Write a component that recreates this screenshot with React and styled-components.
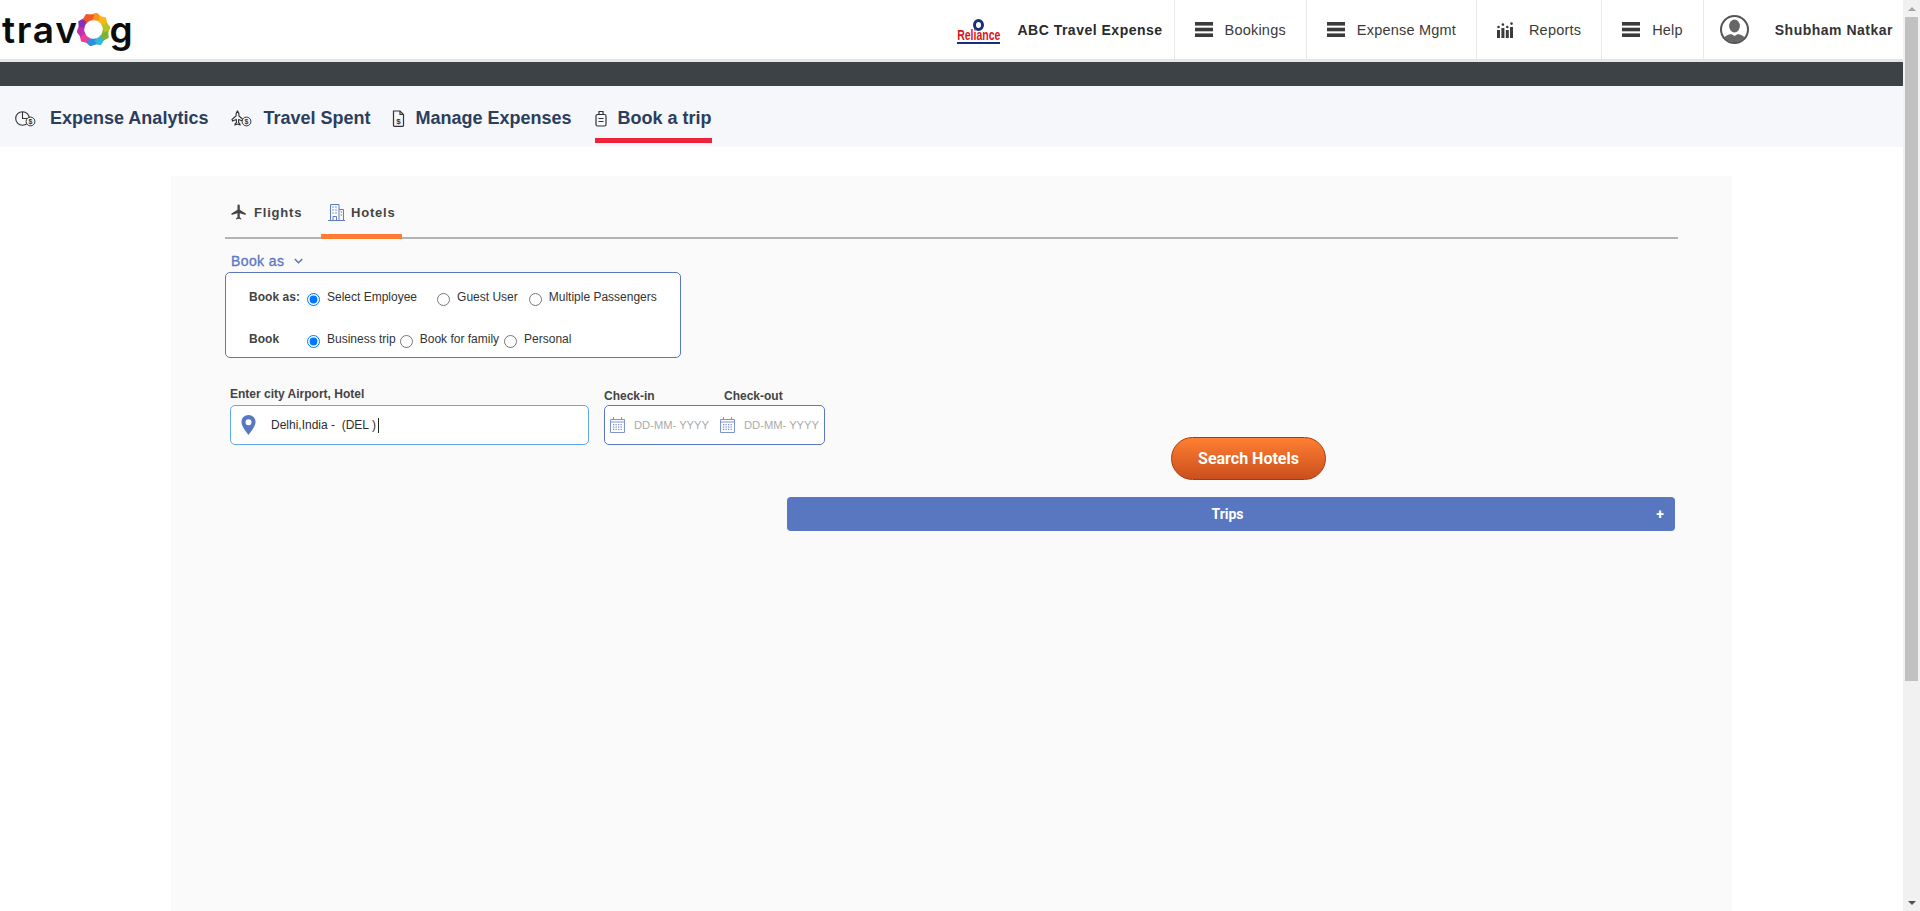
import React from "react";
import styled, { createGlobalStyle } from "styled-components";
import { MdFlight } from "react-icons/md";

const Global = createGlobalStyle`
  html, body {
    margin: 0;
    padding: 0;
    height: 100%;
    overflow: hidden;
    background: #fff;
    font-family: "Liberation Sans", Arial, sans-serif;
  }
`;

const Shell = styled.div`
  display: flex;
  height: 100vh;
  overflow: hidden;
`;

const Main = styled.div`
  flex: 1;
  min-width: 0;
  display: flex;
  flex-direction: column;
`;

const ScrollTrack = styled.aside`
  width: 17px;
  flex: none;
  background: #f1f1f1;
  display: flex;
  flex-direction: column;
  align-items: center;
`;

const ScrollArrow = styled.div`
  flex: none;
  height: 17px;
  display: flex;
  align-items: center;
  justify-content: center;
  &::before {
    content: "";
    width: 0;
    height: 0;
    border-left: 4px solid transparent;
    border-right: 4px solid transparent;
    ${(p) => (p.$down ? "border-top: 4px solid #505050;" : "border-bottom: 4px solid #a3a3a3;")}
  }
`;

const ScrollThumb = styled.div`
  width: 13px;
  height: 664px;
  background: #c1c1c1;
`;

const ScrollGap = styled.div`
  flex: 1;
`;

const Header = styled.header`
  flex: none;
  height: 59px;
  display: flex;
  justify-content: space-between;
  background: #fff;
  border-bottom: 3px solid #e6e6e6;
`;

const Logo = styled.div`
  display: flex;
  align-items: baseline;
  padding: 0 0 0 2px;
  font-family: Inter, sans-serif;
  font-size: 37px;
  font-weight: 600;
  line-height: 59px;
  letter-spacing: 1.7px;
  color: #0c0c0c;
  height: 59px;
  overflow: hidden;
`;

const LogoRing = styled.svg`
  width: 33px;
  height: 33px;
  margin: 0 0 0 -2px;
  transform: translateY(3px);
`;

const HeaderRight = styled.div`
  display: flex;
  align-items: stretch;
`;

const Brand = styled.div`
  display: flex;
  align-items: center;
  padding-right: 11px;
`;

const RelianceMark = styled.div`
  width: 43px;
  margin-right: 17px;
  display: flex;
  flex-direction: column;
  align-items: center;
  margin-top: 3px;
`;

const RelianceDot = styled.div`
  width: 11px;
  height: 12px;
  border: 3px solid #16307c;
  border-radius: 50%;
  margin-bottom: -2px;
  box-sizing: border-box;
`;

const RelianceWord = styled.div`
  font-size: 14px;
  font-weight: 700;
  color: #d8141c;
  line-height: 12px;
  transform: scaleX(0.75);
`;

const RelianceLine = styled.div`
  width: 43px;
  height: 2px;
  background: #16307c;
  margin-top: 1px;
`;

const BrandName = styled.span`
  font-size: 14px;
  font-weight: 700;
  letter-spacing: 0.5px;
  color: #2a2a2a;
`;

const NavItem = styled.a`
  display: flex;
  align-items: center;
  gap: ${(p) => p.$gap || 12}px;
  padding: 0 ${(p) => p.$pad || 20}px;
  border-left: 1px solid #e8e8e8;
  font-size: 14.5px;
  letter-spacing: 0.2px;
  color: #3a3a3a;
`;

const UserBox = styled.div`
  display: flex;
  align-items: center;
  gap: 26px;
  padding: 0 10px 0 16px;
  border-left: 1px solid #e8e8e8;
`;

const UserName = styled.span`
  font-size: 14px;
  font-weight: 700;
  letter-spacing: 0.5px;
  color: #333;
`;

const DarkBar = styled.div`
  flex: none;
  height: 24px;
  background: #3c4245;
`;

const SubNav = styled.nav`
  flex: none;
  height: 61px;
  box-sizing: border-box;
  display: flex;
  padding: 0 0 4px 15px;
  background: #f5f7fb;
`;

const SubLink = styled.a`
  display: flex;
  align-items: center;
  gap: ${(p) => p.$gap}px;
  margin-right: ${(p) => p.$right}px;
  box-sizing: border-box;
  padding-top: 13px;
  border-bottom: 5px solid ${(p) => (p.$active ? "#ee2238" : "transparent")};
  font-size: 18px;
  font-weight: 700;
  color: #2c3e5c;
`;

const Panel = styled.section`
  flex: 1;
  width: 1561px;
  box-sizing: border-box;
  margin: 29px 0 0 171px;
  padding: 17px 54px 0 54px;
  background: #fafafa;
`;

const Tabs = styled.div`
  display: flex;
  height: 46px;
  box-sizing: border-box;
  border-bottom: 2px solid #b3b3b3;
`;

const Tab = styled.a`
  display: flex;
  align-items: center;
  gap: ${(p) => p.$gap}px;
  height: 46px;
  box-sizing: border-box;
  padding: 0 6px 0 ${(p) => p.$left}px;
  width: ${(p) => p.$width}px;
  margin-right: ${(p) => p.$right || 0}px;
  border-bottom: ${(p) => (p.$active ? "5px solid #ff7b32" : "none")};
  padding-bottom: ${(p) => (p.$active ? 3 : 8)}px;
  font-size: 13px;
  font-weight: 700;
  letter-spacing: 0.8px;
  color: #444;
`;

const BookToggle = styled.div`
  display: flex;
  align-items: center;
  gap: 10px;
  height: 33px;
  padding: 11px 0 0 6px;
  box-sizing: border-box;
  font-size: 14px;
  letter-spacing: 0.4px;
  color: #5a77bf;
  -webkit-text-stroke: 0.3px #5a77bf;
`;

const BookBox = styled.div`
  width: 456px;
  height: 86px;
  box-sizing: border-box;
  display: flex;
  flex-direction: column;
  gap: 16px;
  padding: 11px 0 0 23px;
  border: 1px solid #5a77c1;
  border-radius: 5px;
  background: #fff;
`;

const RadioRow = styled.div`
  display: flex;
  align-items: center;
  height: 26px;
  font-size: 12px;
  color: #333;
`;

const RadioLabel = styled.span`
  width: 58px;
  flex: none;
  font-weight: 700;
  color: #444;
  letter-spacing: 0.05px;
`;

const RadioOption = styled.label`
  display: flex;
  align-items: center;
  gap: 7px;
  margin-right: ${(p) => p.$right}px;
`;

const Radio = styled.input.attrs({ type: "radio" })`
  width: 13px;
  height: 13px;
  margin: 4px 0 0;
`;

const FieldRow = styled.div`
  display: flex;
  align-items: flex-end;
  gap: 15px;
  margin: 29px 0 -8px 5px;
`;

const Field = styled.div`
  display: flex;
  flex-direction: column;
  gap: ${(p) => p.$gap}px;
`;

const FieldLabel = styled.label`
  font-size: 12px;
  font-weight: 700;
  color: #444;
  line-height: 14px;
`;

const DateLabels = styled.div`
  display: flex;
`;

const DateLabel = styled(FieldLabel)`
  width: 120px;
`;

const CityBox = styled.div`
  width: 359px;
  height: 40px;
  box-sizing: border-box;
  display: flex;
  align-items: center;
  gap: 15px;
  padding-left: 10px;
  border: 1px solid #62a8ea;
  border-radius: 5px;
  background: #fff;
  font-size: 12px;
  color: #2d2d2d;
`;

const Caret = styled.span`
  width: 1px;
  height: 15px;
  background: #222;
  margin-left: 2px;
`;

const CityText = styled.span`
  display: flex;
  align-items: center;
`;

const DateBox = styled.div`
  width: 221px;
  height: 40px;
  box-sizing: border-box;
  display: flex;
  align-items: center;
  padding-left: 5px;
  border: 1px solid #5a77c1;
  border-radius: 5px;
  background: #fff;
`;

const DateSlot = styled.div`
  width: 110px;
  flex: none;
  display: flex;
  align-items: center;
  gap: 9px;
  font-size: 11.2px;
  color: #aaa;
`;

const Lower = styled.div`
  margin-left: 562px;
  display: flex;
  flex-direction: column;
`;

const SearchButton = styled.button`
  width: 155px;
  height: 43px;
  margin-left: 384px;
  padding: 0;
  border: 1px solid #a93a10;
  border-radius: 22px;
  background: linear-gradient(#ff7f32, #cb4f1d);
  color: #fff;
  font-family: Roboto, sans-serif;
  font-size: 16px;
  font-weight: 700;
`;

const TripsBar = styled.div`
  position: relative;
  width: 888px;
  height: 34px;
  box-sizing: border-box;
  padding-right: 7px;
  margin-top: 17px;
  display: flex;
  align-items: center;
  justify-content: center;
  border-radius: 4px;
  background: #5877c0;
  color: #fff;
  font-family: Roboto, sans-serif;
  font-size: 14px;
  font-weight: 700;
`;

const TripsPlus = styled.span`
  position: absolute;
  right: 11px;
  top: 9px;
  line-height: 16px;
  font-size: 14px;
`;

function Bars() {
  return (
    <svg width="18" height="15" viewBox="0 0 18 15" fill="#3b3b3b">
      <rect width="18" height="3.6" />
      <rect y="5.7" width="18" height="3.6" />
      <rect y="11.4" width="18" height="3.6" />
    </svg>
  );
}

function ReportsIcon() {
  return (
    <svg width="16" height="16" viewBox="0 0 16 16" fill="#3b3b3b">
      <rect x="0" y="8" width="3" height="8" />
      <rect x="4.4" y="6" width="3" height="10" />
      <rect x="8.8" y="8" width="3" height="8" />
      <rect x="13" y="5" width="3" height="11" />
      <circle cx="1.5" cy="5" r="1.3" />
      <circle cx="5.9" cy="2.6" r="1.3" />
      <circle cx="10.3" cy="5" r="1.3" />
      <circle cx="14.5" cy="1.6" r="1.3" />
    </svg>
  );
}

function Avatar() {
  return (
    <svg width="29" height="29" viewBox="0 0 29 29">
      <defs>
        <clipPath id="avatar-clip">
          <circle cx="14.5" cy="14.5" r="12.6" />
        </clipPath>
      </defs>
      <circle cx="14.5" cy="14.5" r="13.5" fill="#fff" stroke="#555" strokeWidth="2" />
      <g clipPath="url(#avatar-clip)" fill="#666">
        <ellipse cx="14.5" cy="11" rx="5.4" ry="6.5" />
        <path d="M2 29c0-7 5-9 9-10l3.500 2 3.500-2c4 1 9 3 9 10z" />
      </g>
    </svg>
  );
}

const ringColors = ["#f7941e", "#fbb517", "#b7c322", "#7fb32d", "#35b6d8", "#2e8fe0", "#ec3f95", "#c22fb0", "#8a30b8", "#f1572a"];

function Ring() {
  return (
    <LogoRing viewBox="0 0 32 32">
      {ringColors.map((c, i) => (
        <polygon
          key={c}
          fill={c}
          points="13,2 19,-0.500 25,5 21,7.500 16,7 13,7.500 15,5"
          transform={`rotate(${i * 36} 16 16)`}
        />
      ))}
    </LogoRing>
  );
}

function SmallDollar({ cx, cy }) {
  return (
    <g>
      <circle cx={cx} cy={cy} r="4.4" fill="#f5f7fb" stroke="#333" strokeWidth="1" />
      <text x={cx} y={cy + 2.5} fontSize="7" fontFamily="Liberation Sans" textAnchor="middle" fill="#333" stroke="none">$</text>
    </g>
  );
}

function AnalyticsIcon() {
  return (
    <svg width="21" height="16" viewBox="0 0 21 16" fill="none" stroke="#333" strokeWidth="1.1">
      <circle cx="7.500" cy="7.500" r="6.800" />
      <path d="M7.500 1v6.500H13" />
      <SmallDollar cx={15.5} cy={10.5} />
    </svg>
  );
}

function PlaneDollarIcon() {
  return (
    <svg width="21" height="17" viewBox="0 0 21 17" fill="none" stroke="#333" strokeWidth="1.1">
      <path d="M8.500 1c1.300 1.200 1.500 3 1.500 5l4 3.500-.5 1.500-3.800-1.500-.2 3 1.500 1.500v1L8.500 14 6 15v-1l1.500-1.500-.2-3-3.800 1.500L3 9.500 7 6c0-2 .3-3.800 1.500-5z" transform="translate(-2 0)" />
      <SmallDollar cx={15.5} cy={11.5} />
    </svg>
  );
}

function DocIcon() {
  return (
    <svg width="13" height="17" viewBox="0 0 13 17" fill="none" stroke="#333" strokeWidth="1.2">
      <path d="M1.500 1h6.500l3.500 3.500v11a.8.8 0 0 1-.8.8H2.300a.8.8 0 0 1-.8-.8z" />
      <path d="M8 1v3.500h3.500" />
      <text x="6.500" y="13.500" fontSize="8" fontFamily="Liberation Sans" fontWeight="700" textAnchor="middle" fill="#333" stroke="none">$</text>
    </svg>
  );
}

function BagIcon() {
  return (
    <svg width="12" height="17" viewBox="0 0 12 17" fill="none" stroke="#333" strokeWidth="1.200">
      <rect x="1" y="4.500" width="10" height="11.500" rx="1.500" />
      <path d="M4 4.500V1.500h4v3M3.500 8.500h5M3.500 11.500h5" />
    </svg>
  );
}

function HotelIcon() {
  return (
    <svg width="17" height="17" viewBox="0 0 17 17" fill="none" stroke="#5f7cc2" strokeWidth="1">
      <path d="M0 16.500h17M2.500 16.500V.5h8.500v16M11 5.500h4.500v11" />
      <path d="M4.500 3h1M7.500 3h1M4.500 6h1M7.500 6h1M4.500 9h1M7.500 9h1M12.800 8h1M12.800 11h1" strokeWidth="1.500" />
      <path d="M5 16.500v-4h3.500v4" />
    </svg>
  );
}

function Chevron() {
  return (
    <svg width="9" height="6" viewBox="0 0 9 6" fill="none" stroke="#5a77bf" strokeWidth="1.600">
      <path d="M.8 1l3.700 3.700L8.200 1" />
    </svg>
  );
}

function Pin() {
  return (
    <svg width="15" height="20" viewBox="0 0 15 20">
      <path fill="#5a77c1" fillRule="evenodd" d="M7.500 0C3.400 0 .5 3 .5 7c0 4.500 4.800 10 7 13 2.200-3 7-8.500 7-13 0-4-2.900-7-7-7zm0 4.200a3 3 0 1 1 0 6 3 3 0 0 1 0-6z" />
    </svg>
  );
}

function Calendar() {
  const dots = [];
  for (let r = 0; r < 3; r++) {
    for (let c = 0; c < 4; c++) {
      dots.push(<rect key={`${r}-${c}`} x={3 + c * 2.5} y={7 + r * 2.4} width="1.300" height="1.300" />);
    }
  }
  return (
    <svg width="15" height="16" viewBox="0 0 15 16" fill="#7d94cf">
      <path fill="none" stroke="#7d94cf" d="M.5 2.500h14v13H.5zM.5 5h14M3.500 0v3M11.500 0v3" />
      {dots}
    </svg>
  );
}

export default function App() {
  return (
    <Shell>
      <Global />
      <Main>
        <Header>
          <Logo>
            trav
            <Ring />
            g
          </Logo>
          <HeaderRight>
            <Brand>
              <RelianceMark>
                <RelianceDot />
                <RelianceWord>Reliance</RelianceWord>
                <RelianceLine />
              </RelianceMark>
              <BrandName>ABC Travel Expense</BrandName>
            </Brand>
            <NavItem><Bars />Bookings</NavItem>
            <NavItem><Bars />Expense Mgmt</NavItem>
            <NavItem $gap={16}><ReportsIcon />Reports</NavItem>
            <NavItem><Bars />Help</NavItem>
            <UserBox>
              <Avatar />
              <UserName>Shubham Natkar</UserName>
            </UserBox>
          </HeaderRight>
        </Header>
        <DarkBar />
        <SubNav>
          <SubLink $gap={14} $right={23}><AnalyticsIcon />Expense Analytics</SubLink>
          <SubLink $gap={11} $right={22}><PlaneDollarIcon />Travel Spent</SubLink>
          <SubLink $gap={10} $right={23}><DocIcon />Manage Expenses</SubLink>
          <SubLink $gap={11} $active><BagIcon />Book a trip</SubLink>
        </SubNav>
        <Panel>
          <Tabs>
            <Tab $left={5} $gap={6} $width={96}><MdFlight size={18} />Flights</Tab>
            <Tab $left={7} $gap={6} $width={81} $active><HotelIcon />Hotels</Tab>
          </Tabs>
          <BookToggle>Book as <Chevron /></BookToggle>
          <BookBox>
            <RadioRow>
              <RadioLabel>Book as:</RadioLabel>
              <RadioOption $right={20}><Radio name="who" defaultChecked />Select Employee</RadioOption>
              <RadioOption $right={11}><Radio name="who" />Guest User</RadioOption>
              <RadioOption $right={0}><Radio name="who" />Multiple Passengers</RadioOption>
            </RadioRow>
            <RadioRow>
              <RadioLabel>Book</RadioLabel>
              <RadioOption $right={4}><Radio name="kind" defaultChecked />Business trip</RadioOption>
              <RadioOption $right={5}><Radio name="kind" />Book for family</RadioOption>
              <RadioOption $right={0}><Radio name="kind" />Personal</RadioOption>
            </RadioRow>
          </BookBox>
          <FieldRow>
            <Field $gap={4}>
              <FieldLabel>Enter city Airport, Hotel</FieldLabel>
              <CityBox>
                <Pin />
                <CityText>Delhi,India -&nbsp; (DEL )<Caret /></CityText>
              </CityBox>
            </Field>
            <Field $gap={2}>
              <DateLabels>
                <DateLabel>Check-in</DateLabel>
                <DateLabel>Check-out</DateLabel>
              </DateLabels>
              <DateBox>
                <DateSlot><Calendar />DD-MM- YYYY</DateSlot>
                <DateSlot><Calendar />DD-MM- YYYY</DateSlot>
              </DateBox>
            </Field>
          </FieldRow>
          <Lower>
            <SearchButton>Search Hotels</SearchButton>
            <TripsBar>Trips<TripsPlus>+</TripsPlus></TripsBar>
          </Lower>
        </Panel>
      </Main>
      <ScrollTrack>
        <ScrollArrow />
        <ScrollThumb />
        <ScrollGap />
        <ScrollArrow $down />
      </ScrollTrack>
    </Shell>
  );
}
